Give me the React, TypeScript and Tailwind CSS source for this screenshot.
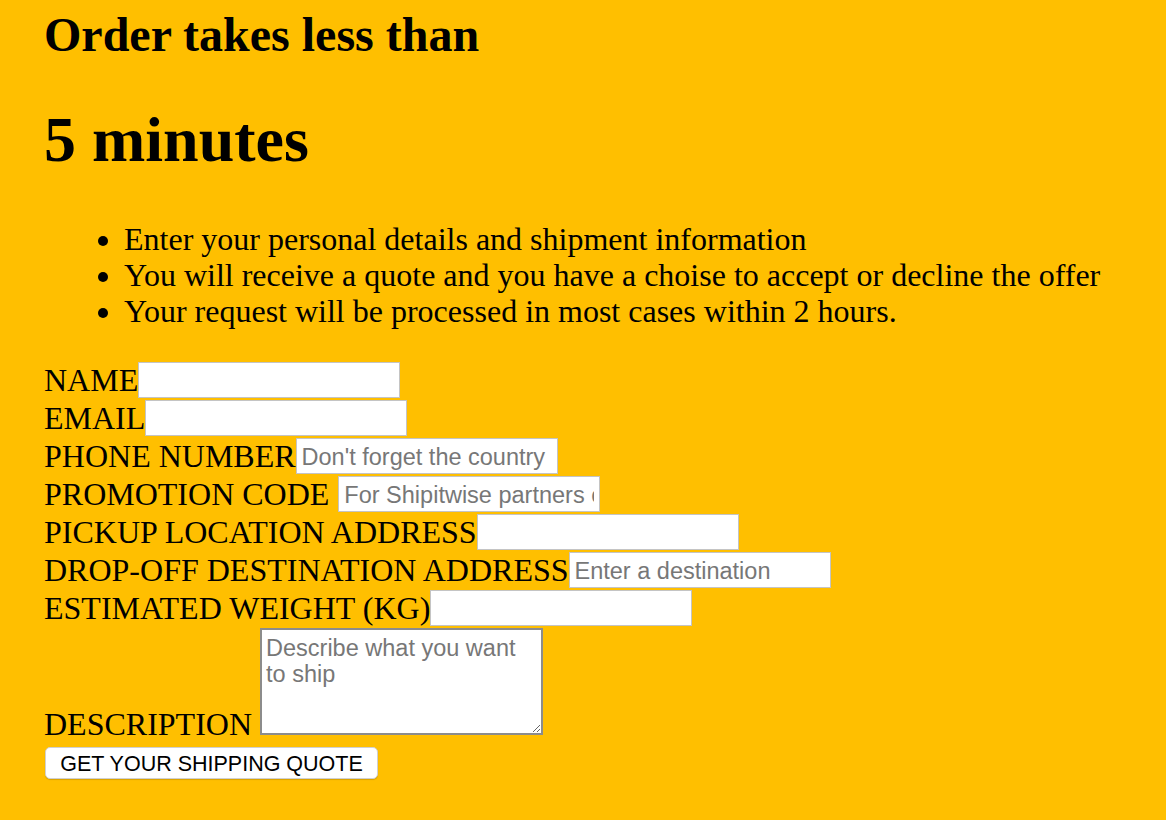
import React from "react";

const fields: { label: string; placeholder?: string; spaced?: boolean }[] = [
  { label: "NAME" },
  { label: "EMAIL" },
  { label: "PHONE NUMBER", placeholder: "Don't forget the country" },
  { label: "PROMOTION CODE", placeholder: "For Shipitwise partners only", spaced: true },
  { label: "PICKUP LOCATION ADDRESS" },
  { label: "DROP-OFF DESTINATION ADDRESS", placeholder: "Enter a destination" },
  { label: "ESTIMATED WEIGHT (KG)" },
];

export default function App() {
  return (
    <div className="min-h-[820px] bg-[#ffbf00] pl-[44px] pt-[7px] text-black font-['Liberation_Serif','Times_New_Roman',serif]">
      <h2 className="text-[48px] font-bold leading-[55px]">Order takes less than</h2>
      <h1 className="mt-[41px] text-[64px] font-bold leading-[74px]">5 minutes</h1>

      <ul className="mt-[44px] list-disc pl-[80px] text-[32px] leading-[36px]">
        <li>Enter your personal details and shipment information</li>
        <li>You will receive a quote and you have a choise to accept or decline the offer</li>
        <li>Your request will be processed in most cases within 2 hours.</li>
      </ul>

      <form className="mt-[32px] text-[32px]" onSubmit={(e) => e.preventDefault()}>
        {fields.map((f) => (
          <div key={f.label} className="flex h-[38px] items-stretch">
            <label className="leading-[38px] whitespace-nowrap">{f.label}</label>
            <input
              type="text"
              placeholder={f.placeholder}
              className={`self-center h-[36px] w-[262px] border border-[#c4c4c4] bg-white px-[5px] pt-[3px] text-[23.5px] text-black outline-none placeholder:text-[#777] font-['Liberation_Sans',Arial,sans-serif] ${
                f.spaced ? "ml-[9px]" : ""
              }`}
            />
          </div>
        ))}
        <div className="flex items-end">
          <label className="leading-[22px] whitespace-nowrap">DESCRIPTION</label>
          <textarea
            placeholder="Describe what you want to ship"
            className="ml-[8px] mt-[1px] h-[107px] w-[283px] border-2 border-[#8c8c8c] bg-white px-[4px] pt-[5px] text-[23.5px] leading-[26px] outline-none placeholder:text-[#777] font-['Liberation_Sans',Arial,sans-serif]"
          />
        </div>
        <button
          type="submit"
          className="ml-[1px] mt-[12px] block h-[32px] w-[333px] rounded-[5px] border border-[#d0d0d0] bg-white pt-[4px] text-[21.5px] leading-none text-black shadow-[0_1px_1px_rgba(0,0,0,0.15)] font-['Liberation_Sans',Arial,sans-serif]"
        >
          GET YOUR SHIPPING QUOTE
        </button>
      </form>
    </div>
  );
}
